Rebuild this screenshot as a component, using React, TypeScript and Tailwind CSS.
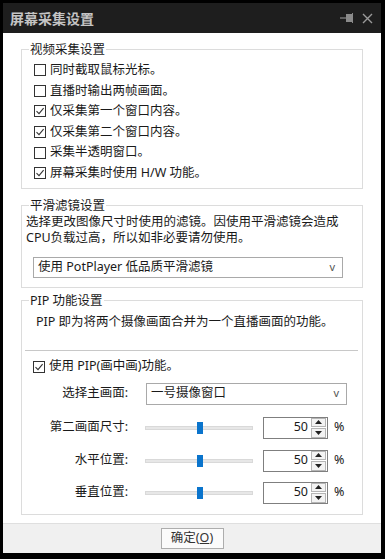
import type { ReactNode } from 'react'

const font = "font-['Noto_Sans','Noto_Sans_CJK_SC',sans-serif]"

function Check({ checked }: { checked?: boolean }) {
  return (
    <span className="w-[12px] h-[12px] border border-[#333] bg-white flex items-center justify-center shrink-0">
      {checked ? (
        <svg width="10" height="10" viewBox="0 0 10 10">
          <path d="M1.5 5.2 L4 7.6 L8.6 2.2" fill="none" stroke="#333" strokeWidth="1.1" />
        </svg>
      ) : null}
    </span>
  )
}

function CheckRow({ label, checked }: { label: string; checked?: boolean }) {
  return (
    <div className="h-[20.6px] flex items-center gap-[4px]">
      <Check checked={checked} />
      <span>{label}</span>
    </div>
  )
}

function Group({ title, className, children }: { title: string; className?: string; children: ReactNode }) {
  return (
    <div className={`border border-[#dcdcdc] ${className ?? ''}`}>
      <div className="-mt-[9px] ml-[7px] px-[1px] bg-white w-fit leading-[17px]">{title}</div>
      {children}
    </div>
  )
}

function Select({ value, className }: { value: string; className?: string }) {
  return (
    <div className={`border border-[#a9a9a9] bg-white flex items-center pl-[4px] pr-[7px] ${className ?? ''}`}>
      <span className="flex-1">{value}</span>
      <span className="text-[11px] text-[#555]">v</span>
    </div>
  )
}

function Spin() {
  return (
    <div className="w-[65px] h-[22px] border border-[#7f7f7f] bg-white flex items-center">
      <span className="flex-1 text-right pr-[3px]">50</span>
      <div className="flex flex-col w-[15px] h-[20px] mr-[1px] gap-[1px]">
        <div className="flex-1 border border-[#b5b5b5] bg-[#f3f3f3] flex items-center justify-center">
          <svg width="7" height="4" viewBox="0 0 7 4"><path d="M0 4 L3.5 0 L7 4 Z" fill="#222" /></svg>
        </div>
        <div className="flex-1 border border-[#b5b5b5] bg-[#f3f3f3] flex items-center justify-center">
          <svg width="7" height="4" viewBox="0 0 7 4"><path d="M0 0 L3.5 4 L7 0 Z" fill="#222" /></svg>
        </div>
      </div>
    </div>
  )
}

function SliderRow({ label, className }: { label: string; className?: string }) {
  return (
    <div className={`flex items-center h-[22px] ${className ?? ''}`}>
      <span className="w-[106px] text-right">{label}</span>
      <div className="ml-[17px] w-[108px] h-[12px] flex items-center">
        <div className="flex-1 h-[4px] bg-[#e7e7e7] border border-[#d9d9d9]" />
      </div>
      <div className="-ml-[56px] w-[6px] h-[12px] bg-[#0a74cc] mr-[50px]" />
      <div className="ml-[10px]">
        <Spin />
      </div>
      <span className="ml-[6px]">%</span>
    </div>
  )
}

export default function App() {
  return (
    <div className={`w-[385px] h-[559px] bg-black pt-[3px] pl-[3px] pr-[4px] pb-[6px] flex flex-col text-[12.5px] text-[#1a1a1a] ${font}`}>
      <div className="h-[30px] bg-[#1e1e1e] flex items-center pl-[7px] pr-[8px] shrink-0">
        <span className="text-[14px] font-bold text-[#c4c4c4] flex-1">屏幕采集设置</span>
        <svg width="14" height="12" viewBox="0 0 14 12" className="mr-[8px]">
          <path d="M0 6 H6" stroke="#8a8a8a" strokeWidth="1.2" />
          <rect x="6" y="2" width="6" height="8" fill="#8a8a8a" />
          <path d="M12.5 1 V11" stroke="#8a8a8a" strokeWidth="1" />
        </svg>
        <svg width="11" height="11" viewBox="0 0 11 11">
          <path d="M1 1 L10 10 M10 1 L1 10" stroke="#9a9a9a" strokeWidth="1.4" />
        </svg>
      </div>

      <div className="flex-1 bg-white flex flex-col">
        <div className="px-[18px]">
          <Group title="视频采集设置" className="mt-[16px] pb-[4px]">
            <div className="pt-[2px] pl-[12px]">
              <CheckRow label="同时截取鼠标光标。" />
              <CheckRow label="直播时输出两帧画面。" />
              <CheckRow label="仅采集第一个窗口内容。" checked />
              <CheckRow label="仅采集第二个窗口内容。" checked />
              <CheckRow label="采集半透明窗口。" />
              <CheckRow label="屏幕采集时使用 H/W 功能。" checked />
            </div>
          </Group>

          <Group title="平滑滤镜设置" className="mt-[16px] pb-[9px]">
            <div className="pl-[4px] leading-[16px]">
              选择更改图像尺寸时使用的滤镜。因使用平滑滤镜会造成
              <br />
              CPU负载过高，所以如非必要请勿使用。
            </div>
            <Select value="使用 PotPlayer 低品质平滑滤镜" className="mt-[11px] ml-[11px] mr-[19px] h-[21px]" />
          </Group>

          <Group title="PIP 功能设置" className="mt-[12px] pb-[10px]">
            <div className="pt-[5px] pl-[14px] leading-[16px]">PIP 即为将两个摄像画面合并为一个直播画面的功能。</div>
            <div className="mt-[20px] ml-[3px] mr-[4px] h-px bg-[#c8c8c8]" />
            <div className="mt-[6px] pl-[11px] h-[20px] flex items-center gap-[4px]">
              <Check checked />
              <span>使用 PIP(画中画)功能。</span>
            </div>
            <div className="mt-[6px] flex items-center h-[22px]">
              <span className="w-[106px] text-right">选择主画面:</span>
              <Select value="一号摄像窗口" className="ml-[18px] w-[201px] h-[22px]" />
            </div>
            <SliderRow label="第二画面尺寸:" className="mt-[12px]" />
            <SliderRow label="水平位置:" className="mt-[11px]" />
            <SliderRow label="垂直位置:" className="mt-[10px]" />
          </Group>
        </div>

        <div className="mt-auto h-[30px] bg-[#f0f0f0] border-t border-[#dfdfdf] flex items-center justify-center">
          <div className="w-[63px] h-[21px] border border-[#adadad] bg-[#fbfbfb] flex items-center justify-center text-[#333]">
            确定(<span className="underline">O</span>)
          </div>
        </div>
      </div>
    </div>
  )
}
